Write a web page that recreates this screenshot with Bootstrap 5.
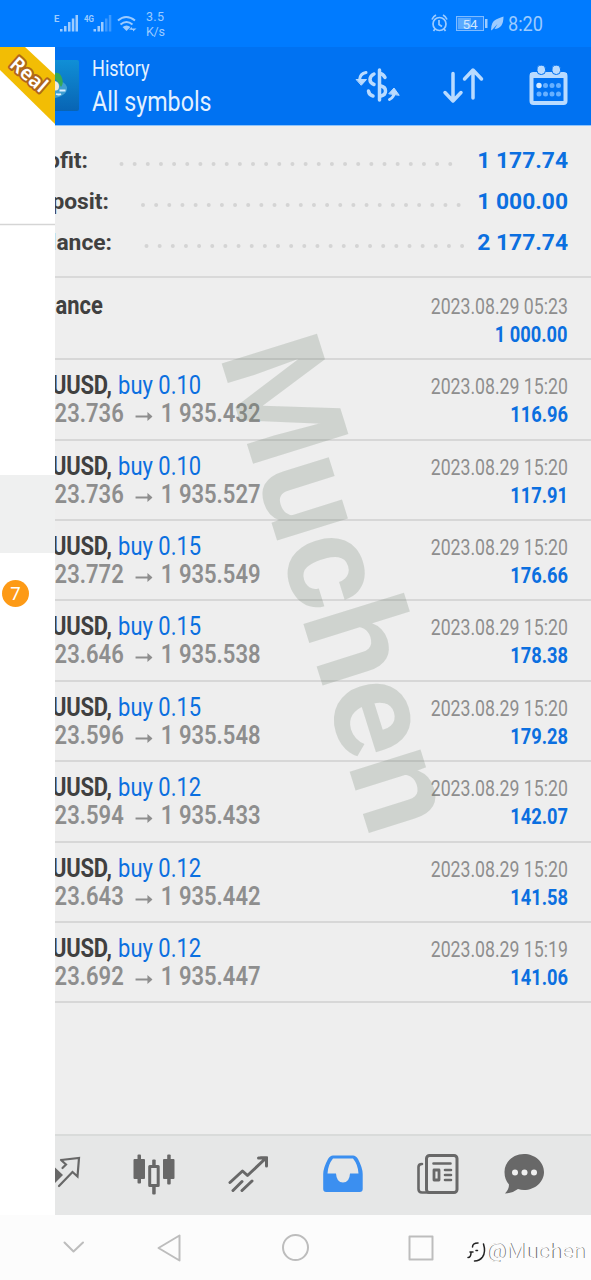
<!DOCTYPE html>
<html lang="en">
<head>
<meta charset="utf-8">
<meta name="viewport" content="width=device-width, initial-scale=1">
<title>History</title>
<link href="https://cdn.jsdelivr.net/npm/bootstrap@5.3.0/dist/css/bootstrap.min.css" rel="stylesheet">
<style>
body{font-family:Roboto,"Liberation Sans",sans-serif;background:#eee;color:#404040;width:591px;height:1280px;overflow:hidden}
.statusbar{height:47px;background:#007bff;color:#9ccbff}
.appbar{height:78px;background:#0072f2;color:#e4f1ff;padding-left:92px}
.cond{display:inline-block;transform-origin:left center;white-space:nowrap}
.cond-r{transform-origin:right center}
.sum{height:152px;border-bottom:2px solid #d9d9d9;padding:14px 23px 0 20px;font-size:22.8px;font-weight:700}
.sumrow{height:41px;line-height:41px}
.sumlabel{text-align:right;white-space:nowrap}
.blue{color:#0b6fe0}
.deal{height:80.4px;border-bottom:2px solid #d7d7d7;padding:13px 23px 0 0;line-height:28px}
.deal.first{height:82.2px;padding-top:15px}
.lhs{margin:-2px 0 0 24px}
.sym{font-size:25.5px;transform:scaleX(.86)}
.sym b{letter-spacing:-.25px;margin-right:1px}
.px{font-size:25.5px;color:#8e8e8e;font-weight:600;transform:scaleX(.863)}
.px svg{margin:0 10px 0 13px;vertical-align:1px}
.when{font-size:21.5px;color:#8e8e8e;transform:scaleX(.822)}
.amt{font-size:21.5px;color:#0b6fe0;font-weight:700;transform:scaleX(.85)}
.drawer{left:0;top:47px;width:55px;height:1168px;background:#fff;overflow:hidden}
.tabs{height:81px;background:#e6e7e7;border-top:2px solid #d9dbda}
.sysnav{height:65px;background:#fcfcfc}
.mark-layer{left:0;top:0;pointer-events:none}
.listwrap{height:1009px;border-top:1px solid #8fc4fb}
</style>
</head>
<body>
<div class="position-relative d-flex flex-column">
  <div class="statusbar">
    <svg class="d-block" width="591" height="47" fill="#9ccbff" font-family="Roboto">
      <text x="54" y="22" font-size="9.500" font-weight="700">E</text>
      <path d="M60 29h2.500v2.500H60zM64 26h2.500v5.500H64zM68 22h2.500v9.500H68zM71.800 18.500h2.500v13h-2.500zM75.500 15h2.500v16.500h-2.500z"/>
      <text x="84" y="22" font-size="9.500" font-weight="700" textLength="10" lengthAdjust="spacingAndGlyphs">4G</text>
      <path d="M93.500 29H96v2.500h-2.500zM97.500 26h2.500v5.500h-2.500zM101 22h2.500v9.500H101z"/>
      <path opacity=".4" d="M105 18.500h2.500v13H105zM108.800 15h2.500v16.500h-2.500z"/>
      <g fill="none" stroke="#9ccbff" stroke-width="2"><path d="M118 20.500q8-7 17 0M120.500 24.500q6-5 12 0"/></g><path d="M122.500 27q4-3 8 0l-4 4zM129 29.500l3-2.500v1.500h4.500L133 31.500v-1.500z"/>
      <text x="146" y="21" font-size="12.500" textLength="18">3.5</text>
      <text x="146" y="35.500" font-size="12.500" textLength="19">K/s</text>
      <g fill="none" stroke="#9ccbff" stroke-width="1.700"><circle cx="439.500" cy="24" r="6.500"/><path d="M439 20v4.500l3 2M432 19.500q1-3 4-4.500M447 19.500q-1-3-4-4.500M435 29l-1.500 2M444 29l1.500 2"/></g>
      <rect x="456.500" y="16.500" width="27" height="14" fill="#1f88ff" stroke="#7fbbff"/><path fill="#5aaaff" d="M458 18h13v11h-13z"/>
      <rect x="485" y="19" width="2.500" height="9"/>
      <text x="470" y="28.500" font-size="13.500" text-anchor="middle" fill="#cfe6ff">54</text>
      <path d="M491 30.500q0-9 5-11 3-1.500 7.500-3 0 12-9 12.500l3-5-5 5.500z"/>
      <text x="508" y="30.500" font-size="19.500" textLength="35" lengthAdjust="spacingAndGlyphs">8:20</text>
    </svg>
  </div>
  <header class="appbar position-relative d-flex justify-content-between">
    <div class="d-flex flex-column" style="padding-top:6px">
      <span class="cond" style="font-size:21.500px;line-height:31px;transform:scaleX(.84)">History</span>
      <span class="cond" style="font-size:27.500px;line-height:35px;transform:scaleX(.845)">All symbols</span>
    </div>
    <svg width="250" height="78" viewBox="341 47 250 78" fill="none" stroke="#b9dbff" stroke-width="3.500" stroke-linecap="round" stroke-linejoin="round">
      <path d="M379.500 70v30M385 77.500q-2-4-5.500-4M374 74q-4 2-4 5.500t4 5M381 86q4.500 1 4.500 5t-4.500 5M368.500 91q.5 4 4.500 5" />
      <path d="M366 72.500q-6 1-6.500 7.500M389.500 99.500q4.500-2 5-8" stroke-width="3"/><path d="M356.500 79.500h10l-5 5.500zM389 93.500l5-5.500 5 7z" fill="#b9dbff" stroke-width="1"/>
      <path d="M453 73.500v26.500M445 92.500l8 8.500 8-8.500M473 98V71M464.500 79l8.500-9 8.500 9"/>
      <rect x="531.500" y="74" width="34" height="29" rx="2" stroke-width="4"/><path d="M530 73h37v5h-37z" fill="#b9dbff" stroke="none"/><g stroke="none" fill="#b9dbff"><rect x="537" y="65" width="8.500" height="9.500" rx="4" stroke="#0072f2" stroke-width="1"/><rect x="552" y="65" width="8.500" height="9.500" rx="4" stroke="#0072f2" stroke-width="1"/><circle cx="539" cy="85.500" r="2.700" fill="#d9ecff"/></g>
      <g stroke="none" fill="#67b0ff"><circle cx="545.500" cy="85.500" r="2.500"/><circle cx="552" cy="85.500" r="2.500"/><circle cx="558.500" cy="85.500" r="2.500"/><circle cx="539" cy="94" r="2.500"/><circle cx="545.500" cy="94" r="2.500"/><circle cx="552" cy="94" r="2.500"/><circle cx="558.500" cy="94" r="2.500"/></g>
    </svg>
    <svg class="position-absolute" style="left:55px;top:12px" width="24" height="54" viewBox="55 59 24 54">
      <defs><linearGradient id="ic" x1="0" y1="0" x2="0" y2="1"><stop offset="0" stop-color="#108fd6"/><stop offset="1" stop-color="#0864b4"/></linearGradient></defs>
      <path fill="url(#ic)" d="M55 60h22q2 0 2 2v47q0 2-2 2H55z"/><path d="M55 82q9-2 12 5 1 8-12 11z" fill="#3f9fd2"/><path d="M55 73q5-1 7 5 2 5-1 9l-3-5-3-3z" fill="#35a957"/><path d="M55 81q4 1 4 5.500t-4 4z" fill="#f1ead8"/><path d="M59.500 90.500h6M56 94q3 1 5 0" stroke="#d9f0ff" stroke-width="1.800" fill="none"/>
    </svg>
  </header>
  <main>
    <div class="listwrap">
      <section class="sum" id="sum"></section>
      <section id="deals"></section>
    </div>
    <nav class="tabs">
      <svg class="d-block" width="591" height="78" viewBox="0 1136.500 591 78" fill="none" stroke="#686868" stroke-width="2.500" stroke-linecap="round" stroke-linejoin="round">
        <path d="M55 1168l8 7.500-8 8z" fill="#686868" stroke="none"/><path d="M61 1160.500l18-2-1.500 18.500-5-4.500-13.500 14M61 1160.500l5 4.500-3.500 3.500" stroke-width="2.200" stroke-linejoin="miter"/>
        <g fill="#686868" stroke="none"><rect x="133.500" y="1159.500" width="11.500" height="20" rx="1"/><rect x="137.500" y="1155" width="3.500" height="29" rx="1"/><rect x="163" y="1159.500" width="11.500" height="20" rx="1"/><rect x="167.200" y="1155" width="3.500" height="30" rx="1"/><rect x="152.200" y="1160" width="3.500" height="35" rx="1"/></g><rect x="149.700" y="1167" width="8.500" height="19" fill="#e6e7e7" stroke-width="3"/>
        <path d="M230 1183l12.500-11.500 5 4.500 18-17M258.500 1158.500h8v8M233 1191l9-9M242 1191l10-9.500" stroke-width="3"/><path d="M260 1157h8v8z" fill="#686868" stroke="none"/>
        <path stroke="none" fill="#3b8ff0" fill-rule="evenodd" d="M333 1156h20q3 0 5 3.500 4.700 9 4.700 15v15q0 3-3 3h-33.500q-3 0-3-3v-15q0-6 4.800-15 2-3.500 5-3.500zm0 3q-5 6-5.500 15h8.500q.5 9 7 9t7-9h8.500q-.5-9-5.500-15z"/>
        <rect x="426.500" y="1156" width="30.500" height="37" rx="3" stroke-width="3"/><path d="M422 1164.500q-3.500 0-3.500 3v22q0 3.500 3.500 3.500h8M433.500 1164h17" stroke-width="2.600"/><rect x="434" y="1170.500" width="5" height="10" stroke-width="2.800"/><path d="M445 1170.500h6M445 1175.500h6M445 1180.500h6" stroke-width="2.600"/>
        <g stroke="none"><path fill="#686868" d="M524 1154.500c11 0 20 8 20 18s-9 18-20 18q-3 0-6-1-5 4-13 4.500 4-4 4-9-4.500-5-4.500-12.500c0-10 8.500-18 19.500-18z"/><g fill="#f0f0f0"><circle cx="515" cy="1173" r="3"/><circle cx="524.500" cy="1173" r="3"/><circle cx="534" cy="1173" r="3"/></g></g>
      </svg>
    </nav>
  </main>
  <footer class="sysnav">
    <svg class="d-block" width="591" height="65" viewBox="0 1215 591 65" fill="none" stroke="#bdbdbd" stroke-width="2" stroke-linecap="round" stroke-linejoin="round">
      <path d="M64.500 1242.500l9 9 9.500-9M179.500 1235.500v25L158.500 1248z"/><circle cx="295.500" cy="1247.500" r="12.500"/><rect x="409.500" y="1236.500" width="23" height="23"/>
      <g stroke="none" font-family="Roboto" font-size="20.500"><text x="487" y="1258" textLength="99" lengthAdjust="spacingAndGlyphs" fill="#666">@Muchen</text><text x="486.200" y="1257.500" textLength="99" lengthAdjust="spacingAndGlyphs" fill="#fcfcfc">@Muchen</text></g>
      <path d="M468 1257.500q3 0 3-5M470 1252h3M472.500 1247q0-4 5.500-4M476 1250.500h1.500M483.500 1244q2.500 8-1 13-3 4-8 4" stroke="#222" stroke-width="1.500"/>
    </svg>
  </footer>

  <aside class="drawer position-absolute">
    <svg class="d-block" width="55" height="1168" viewBox="0 47 55 1168">
      <path d="M0 224.500h55" stroke="#d5d5d5" stroke-width="1.500"/>
      <path d="M0 475h55v78H0z" fill="#eff0f0"/>
      <path d="M0 47h25l30 28v49L0 70z" fill="#f2bd05"/>
      <text transform="translate(8.500 66) rotate(41)" font-family="Noto Sans" font-weight="600" font-size="20" fill="#fff" stroke="#b0671a" stroke-width="4" paint-order="stroke" stroke-linejoin="round" textLength="42">Real</text>
      <circle cx="15.500" cy="593.500" r="13.500" fill="#fd9a16"/><text x="15.500" y="600" font-size="18.500" text-anchor="middle" fill="#fff" font-family="Roboto">7</text>
    </svg>
  </aside>
  <svg class="mark-layer position-absolute" width="591" height="1280"><text transform="translate(219 355) rotate(72.600)" font-family="Roboto" font-weight="700" font-size="140.500" fill="#647864" fill-opacity=".22">Muchen</text></svg>
</div>
<script>
// label, label right edge, first dot, amount, number of dots
const sums=[["Profit:",88,121.5,"1 177.74",26],["Deposit:",109,143,"1 000.00",25],["Balance:",112,146.5,"2 177.74",25]];
document.getElementById("sum").innerHTML=sums.map(([l,r,d,v,n])=>`<div class="sumrow d-flex"><span class="sumlabel" style="width:${r-20}px">${l}</span><svg class="flex-grow-1" height="41"><path d="M${d-r} 24H${d-r+13.15*(n-.5)}" stroke="#d4d4d4" stroke-width="4" stroke-linecap="round" stroke-dasharray="0 13.150"/></svg><span class="blue">${v}</span></div>`).join("");
const deals=[["0.10","23.736","432","15:20","116.96"],["0.10","23.736","527","15:20","117.91"],["0.15","23.772","549","15:20","176.66"],["0.15","23.646","538","15:20","178.38"],["0.15","23.596","548","15:20","179.28"],["0.12","23.594","433","15:20","142.07"],["0.12","23.643","442","15:20","141.58"],["0.12","23.692","447","15:19","141.06"]];
const right=(t,v)=>`<div class="d-flex flex-column align-items-end"><span class="cond cond-r when">2023.08.29 ${t}</span><span class="cond cond-r amt">${v}</span></div>`;
const arrow='<svg width="20" height="9" fill="none" stroke="#8e8e8e" stroke-width="1.800"><path d="M0 4.500h18"/><path d="M14 0l6 4.500-6 4.500z" fill="#8e8e8e" stroke="none"/></svg>';
document.getElementById("deals").innerHTML=`<div class="deal first d-flex justify-content-between"><div class="lhs"><b class="cond sym">Balance</b></div>${right("05:23","1 000.00")}</div>`+
deals.map(([q,a,b,t,v])=>`<div class="deal d-flex justify-content-between"><div class="lhs d-flex flex-column"><span class="cond sym"><b>XAUUSD,</b> <span class="blue">buy ${q}</span></span><span class="cond px">1 9${a}${arrow}1 935.${b}</span></div>${right(t,v)}</div>`).join("");
</script>
<script src="https://cdn.jsdelivr.net/npm/bootstrap@5.3.0/dist/js/bootstrap.bundle.min.js"></script>
</body>
</html>
